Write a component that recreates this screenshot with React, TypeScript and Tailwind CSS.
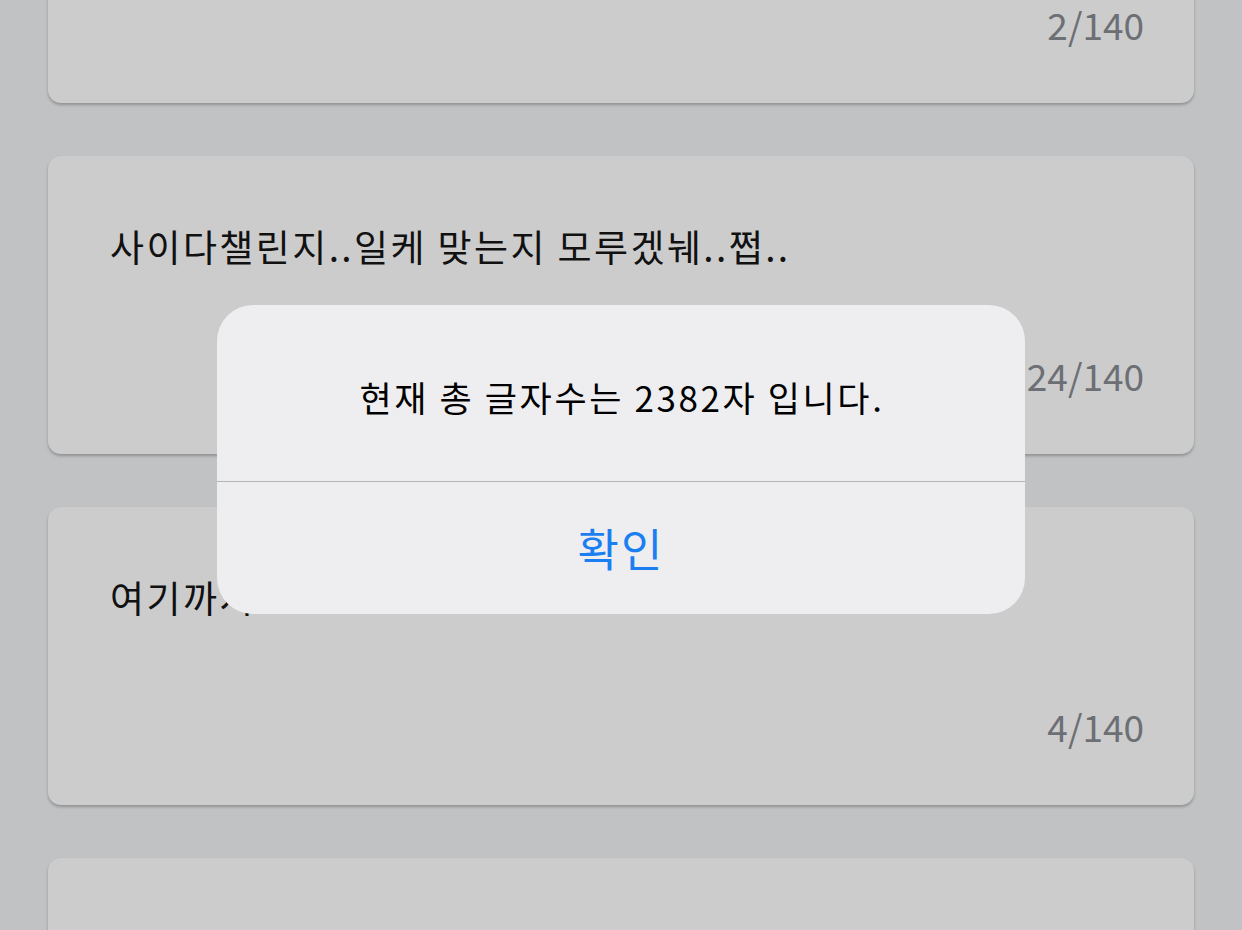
import React from 'react'

const font = { fontFamily: '"Noto Sans CJK KR", "Noto Sans", sans-serif' }

const notes = [
  { text: '응응', count: '2/140' },
  { text: '사이다챌린지..일케 맞는지 모루겠눼..쩝..', count: '24/140' },
  { text: '여기까지', count: '4/140' },
  { text: '', count: '0/140' },
]

const NoteCard = ({ text, count }: { text: string; count: string }) => (
  <div className="h-[298px] shrink-0 rounded-[13px] bg-[#cccccc] shadow-[0_2px_3px_rgba(0,0,0,0.25)] flex flex-col justify-between pl-[62px] pr-[50px] pt-[68px] pb-[57px]">
    <p className="text-[37px] leading-[44px] text-[#111111] tracking-[2.4px]">{text}</p>
    <p className="text-right text-[37px] leading-[44px] text-[#6c6f74]">{count}</p>
  </div>
)

const App = () => {
  return (
    <div style={font} className="relative h-[930px] w-full overflow-hidden bg-[#c1c2c4]">
      <div className="mt-[-195px] flex flex-col gap-[53px] px-[48px]">
        {notes.map((n, i) => (
          <NoteCard key={i} text={n.text} count={n.count} />
        ))}
      </div>

      {/* alert */}
      <div className="absolute left-[217px] top-[305px] w-[808px] h-[309px] rounded-[36px] bg-[#eeeef0] flex flex-col overflow-hidden">
        <div className="h-[177px] flex items-center justify-center border-b border-[#b4b4b8]">
          <p className="text-[35px] text-black pt-[8px] pl-[2px] tracking-[2.6px]">현재 총 글자수는 2382자 입니다.</p>
        </div>
        <button className="flex-1 flex items-center justify-center text-[45px] text-[#1b7ff2] tracking-[2px]">확인</button>
      </div>
    </div>
  )
}

export default App
